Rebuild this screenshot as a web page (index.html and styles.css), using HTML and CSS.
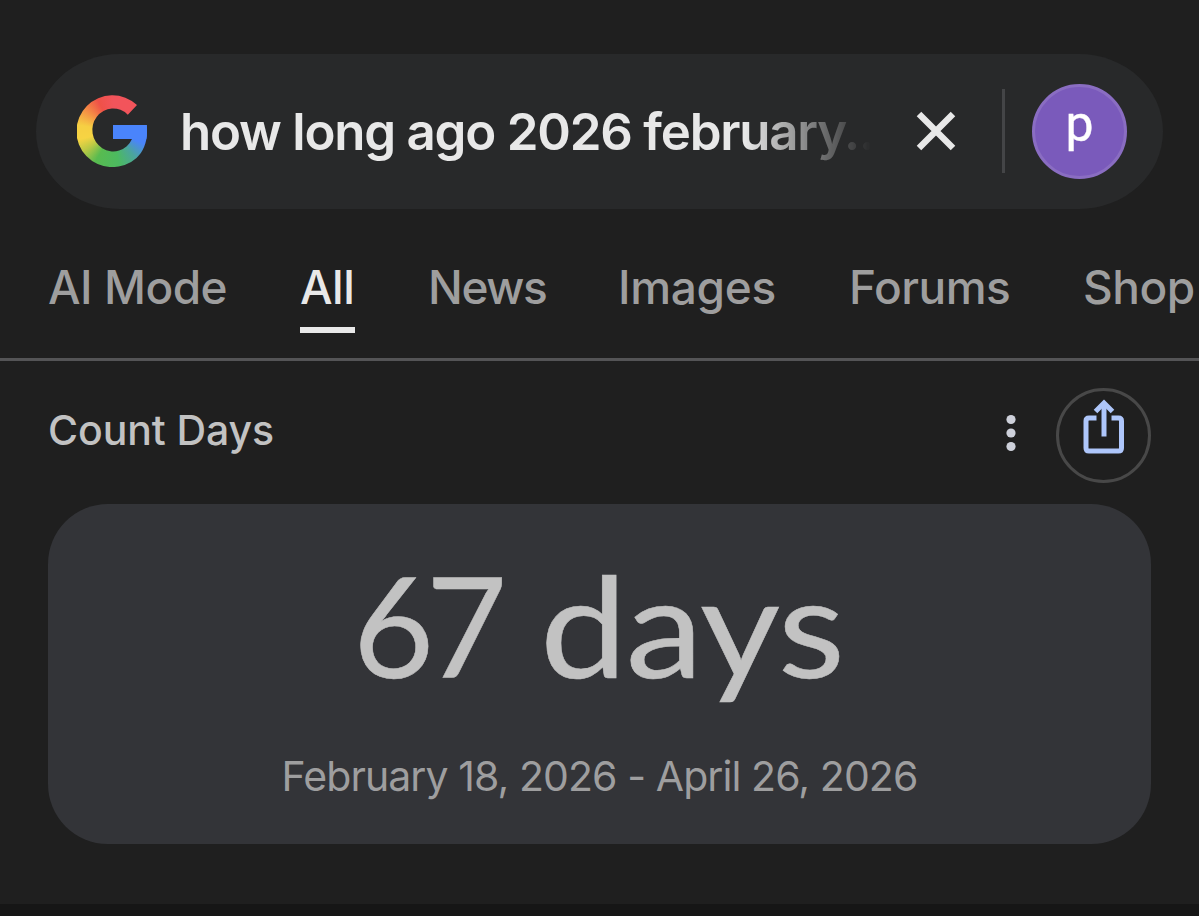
FILE: index.html
```
<!DOCTYPE html>
<html lang="en">
<head>
	<meta charset="utf-8">
	<meta name="viewport" content="width=device-width, initial-scale=1">
	<title>how long ago 2026 february - Search</title>
	<link rel="stylesheet" href="styles.css">
</head>
<body>
	<header class="searchbar">
		<div class="logo"></div>
		<div class="query">how long ago 2026 february...</div>
		<svg class="clear" width="40" height="40" viewBox="0 0 40 40">
			<path d="M3 3L37 37M37 3L3 37" stroke="#e8e8e8" stroke-width="6.4" fill="none"/>
		</svg>
		<div class="divider"></div>
		<div class="avatar">p</div>
	</header>
	<nav class="tabs">
		<a class="tab t-ai">AI Mode</a>
		<a class="tab t-all active">All</a>
		<a class="tab t-news">News</a>
		<a class="tab t-images">Images</a>
		<a class="tab t-forums">Forums</a>
		<a class="tab t-shop">Shop</a>
	</nav>
	<main>
		<div class="heading">
			<h2>Count Days</h2>
			<svg class="more" width="10" height="38" viewBox="0 0 10 38">
				<circle cx="5" cy="5.5" r="4.6"/>
				<circle cx="5" cy="19" r="4.6"/>
				<circle cx="5" cy="32.5" r="4.6"/>
			</svg>
			<div class="share">
				<svg width="42" height="56" viewBox="0 0 42 56">
					<path d="M13.500 20H6Q3 20 3 23V50Q3 53 6 53H35.500Q38.500 53 38.500 50V23Q38.500 20 35.500 20H28.500" fill="none" stroke="#aec6fa" stroke-width="5"/>
					<path d="M21 38.500V7" fill="none" stroke="#aec6fa" stroke-width="5"/>
					<path d="M12.500 13.500L21 5L29.500 13.500" fill="none" stroke="#aec6fa" stroke-width="5"/>
				</svg>
			</div>
		</div>
		<section class="card">
			<div class="days"><span class="num">67</span> <span class="unit">days</span></div>
			<div class="range">February 18, 2026 - April 26, 2026</div>
		</section>
	</main>
	<footer></footer>
</body>
</html>
```
FILE: styles.css
```
* {
	box-sizing: border-box;
}
body {
	margin: 0;
	height: 916px;
	overflow: hidden;
	display: flex;
	flex-direction: column;
	background: #1f1f1f;
	font-family: "Inter", "Roboto", sans-serif;
}
.searchbar {
	flex: none;
	display: flex;
	align-items: center;
	height: 155px;
	margin: 54px 36px 0;
	padding: 0 35px 1px 41px;
	border-radius: 84px / 77.5px;
	background: #28292a;
}
.logo {
	flex: none;
	width: 72px;
	height: 72px;
	/* the blue bar sits on top of the ring colours */
	background:
		linear-gradient(#4a84fb, #4a84fb) 36px 30px / 36px 14px no-repeat,
		conic-gradient(#f2545b 0deg, #f2545b 55deg, #4a84fb 65deg, #4a84fb 112deg, #4ba59c 140deg, #4cba60 170deg, #58bb50 210deg, #b9c945 235deg, #f6d443 256deg, #f6cf43 280deg, #f58e45 308deg, #ef5148 334deg, #f2545b 360deg);
	clip-path: path("M60 10A36 36 0 1 0 59.500 63C66 57 70 48 70 36.500Q70 33 69.700 30H36V44H55A20.800 21.500 0 1 1 50.800 19.700Z");
}
.query {
	flex: none;
	width: 691px;
	margin-left: 31px;
	padding-top: 1px;
	white-space: nowrap;
	color: #e8e8e8;
	font-size: 51px;
	font-weight: 600;
	line-height: 70px;
	letter-spacing: -1.22px;
	-webkit-mask-image: linear-gradient(90deg, #000 565px, rgba(0,0,0,.35) 645px, transparent 691px);
	mask-image: linear-gradient(90deg, #000 565px, rgba(0,0,0,.35) 645px, transparent 691px);
}
.clear {
	flex: none;
	margin-left: 45px;
}
.divider {
	flex: none;
	width: 3px;
	height: 84px;
	margin-left: 46px;
	background: #444547;
}
.avatar {
	flex: none;
	display: flex;
	justify-content: center;
	width: 95px;
	height: 95px;
	margin-left: 27px;
	border: 3px solid #8a6dc2;
	border-radius: 50%;
	background: #7a5abb;
	color: #fff;
	font: 400 50px/74px "Roboto", sans-serif;
	-webkit-text-stroke: .4px #fff;
}
.tabs {
	flex: none;
	display: flex;
	height: 152px;
	padding: 49px 0 0 48px;
	border-bottom: 3px solid #545456;
	color: #9e9e9e;
	font-size: 46px;
	font-weight: 500;
	line-height: 59px;
	letter-spacing: -.5px;
	white-space: nowrap;
}
.tab {
	flex: none;
	height: 75px;
	margin-right: 73px;
}
.active {
	border-bottom: 6px solid #e8e8e8;
	color: #e8e8e8;
}
.t-ai {
	width: 179px;
}
.t-all {
	width: 55px;
}
.t-news {
	width: 117px;
	letter-spacing: -1.4px;
}
.t-images {
	width: 158px;
	letter-spacing: -.3px;
}
.t-forums {
	width: 161px;
}
.t-shop {
	margin-right: 0;
}
main {
	flex: none;
	height: 543px;
	padding: 27px 48px 0;
}
.heading {
	display: flex;
	height: 95px;
}
.heading h2 {
	flex: 1;
	margin: 0;
	color: #c2c2c2;
	font-size: 41px;
	font-weight: 500;
	line-height: 84px;
	letter-spacing: -.1px;
}
.more {
	margin: 26px 40px 0 0;
	fill: #cdd0da;
}
.share {
	display: flex;
	justify-content: center;
	width: 95px;
	height: 95px;
	padding-top: 7px;
	border: 3px solid #484848;
	border-radius: 50%;
}
.card {
	height: 340px;
	margin-top: 21px;
	padding-top: 40px;
	border-radius: 60px;
	background: #333438;
	text-align: center;
	white-space: nowrap;
}
.days {
	display: flex;
	justify-content: center;
	gap: 56px;
	padding-right: 17px;
	color: #c2c2c2;
	font: 400 140px/160px "Lato", sans-serif;
	-webkit-text-stroke: .5px #c2c2c2;
}
.num {
	letter-spacing: -8px;
}
/* slightly extended letterforms */
.unit {
	letter-spacing: -1px;
	transform: scaleX(1.11);
}
.range {
	margin-top: 47px;
	color: #9e9e9f;
	font-size: 41px;
	line-height: 50px;
	letter-spacing: -.92px;
}
footer {
	flex: 1;
	background: #161616;
}
```
